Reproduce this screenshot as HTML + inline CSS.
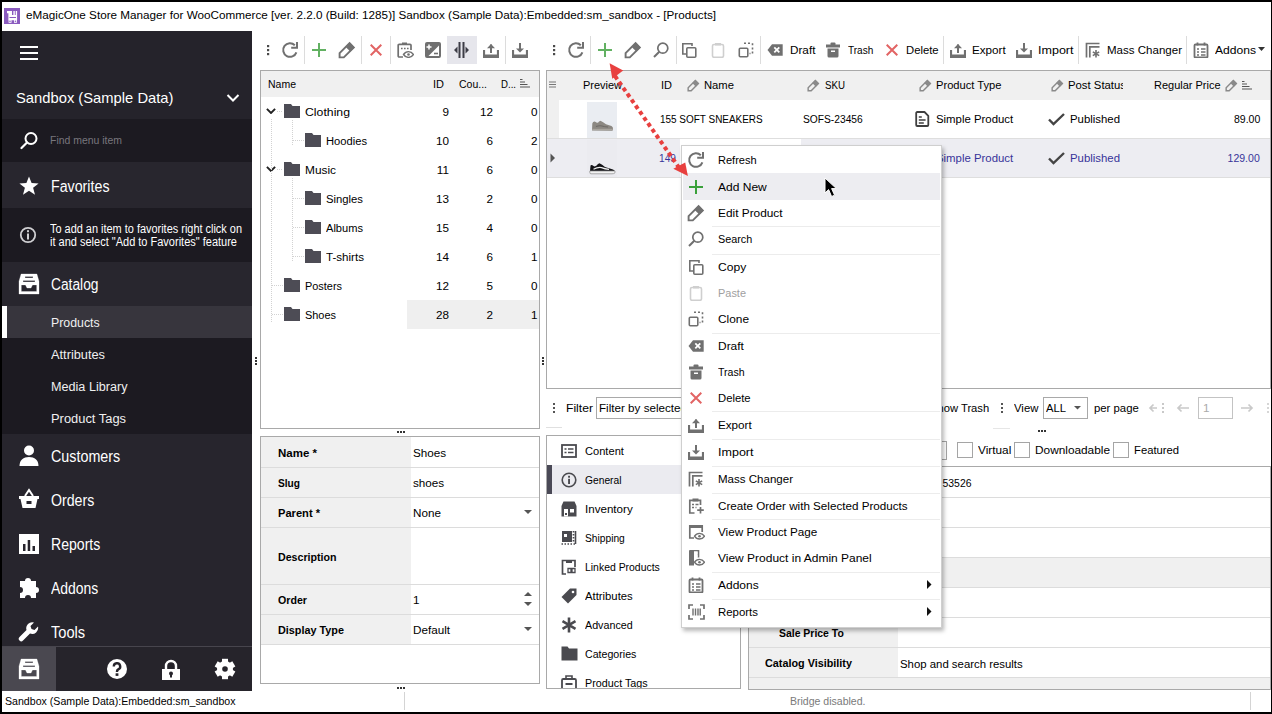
<!DOCTYPE html>
<html><head><meta charset="utf-8"><style>
html,body{margin:0;padding:0;}
body{width:1272px;height:714px;position:relative;overflow:hidden;background:#000;font-family:"Liberation Sans", sans-serif;}
div,svg{font-family:"Liberation Sans", sans-serif;}
</style></head><body>
<div style="position:absolute;left:2px;top:2px;width:1269px;height:710px;background:#ffffff;"></div>
<svg style="position:absolute;left:4px;top:8px;" width="16" height="16" viewBox="0 0 16 16"><rect width="16" height="16" fill="#8a5bbf"/><path d="M3 3H8V7.1H9.4V3H10.8V7.1H11.7V3H13.1V12.3H4.4V5.2H3Z" fill="#fff"/><rect x="4.6" y="11.8" width="2.9" height="3" fill="#fff"/><rect x="10" y="11.8" width="2.9" height="3" fill="#fff"/><circle cx="6" cy="13.3" r="0.8" fill="#8a5bbf"/><circle cx="11.4" cy="13.3" r="0.8" fill="#8a5bbf"/><rect x="5.5" y="9" width="6.5" height="1" fill="#8a5bbf"/></svg>
<div id="t0" style="transform:scaleX(1.0014);position:absolute;left:26px;transform-origin:left top;top:9.10px;font-size:11.7px;line-height:11.7px;font-weight:normal;color:#000;white-space:pre;">eMagicOne Store Manager for WooCommerce [ver. 2.2.0 (Build: 1285)] Sandbox (Sample Data):Embedded:sm_sandbox - [Products]</div>
<div style="position:absolute;left:2px;top:31px;width:250px;height:660px;background:#25232b;"></div>
<div style="position:absolute;left:2px;top:119px;width:250px;height:43px;background:#1c1a21;"></div>
<div style="position:absolute;left:2px;top:162px;width:250px;height:46px;background:#28262e;"></div>
<div style="position:absolute;left:2px;top:208px;width:250px;height:54px;background:#1c1a21;"></div>
<div style="position:absolute;left:2px;top:262px;width:250px;height:44px;background:#28262e;"></div>
<div style="position:absolute;left:2px;top:306px;width:250px;height:32px;background:#37353d;"></div>
<div style="position:absolute;left:2px;top:306px;width:5px;height:32px;background:#ffffff;"></div>
<div style="position:absolute;left:2px;top:338px;width:250px;height:96px;background:#1c1a21;"></div>
<div style="position:absolute;left:2px;top:434px;width:250px;height:212px;background:#27252d;"></div>
<div style="position:absolute;left:2px;top:646px;width:250px;height:1px;background:#47454d;"></div>
<div style="position:absolute;left:2px;top:647px;width:250px;height:44px;background:#26242b;"></div>
<div style="position:absolute;left:2px;top:647px;width:54px;height:44px;background:#4a4850;"></div>
<div style="position:absolute;left:20px;top:46px;width:18px;height:2px;background:#ffffff;"></div>
<div style="position:absolute;left:20px;top:52px;width:18px;height:2px;background:#ffffff;"></div>
<div style="position:absolute;left:20px;top:58px;width:18px;height:2px;background:#ffffff;"></div>
<div id="t1" style="transform:scaleX(0.9838);position:absolute;left:15.6px;transform-origin:left top;top:90.30px;font-size:15px;line-height:15px;font-weight:normal;color:#ffffff;white-space:pre;">Sandbox (Sample Data)</div>
<svg style="position:absolute;left:226px;top:93px;" width="14" height="10" viewBox="0 0 14 10"><path d="M1.5 2l5.5 5.5 5.5-5.5" stroke="#fff" stroke-width="2" fill="none"/></svg>
<svg style="position:absolute;left:20px;top:131px;" width="19" height="19" viewBox="0 0 19 19"><circle cx="11" cy="7.5" r="5.5" stroke="#fff" stroke-width="2" fill="none"/><path d="M7 11.5l-5.5 5.5" stroke="#fff" stroke-width="2.2" stroke-linecap="round"/></svg>
<div id="t2" style="transform:scaleX(0.9497);position:absolute;left:49.5px;transform-origin:left top;top:134.69px;font-size:11px;line-height:11px;font-weight:normal;color:#78767d;white-space:pre;">Find menu item</div>
<svg style="position:absolute;left:19px;top:176px;" width="20" height="20" viewBox="0 0 20 20"><path d="M10 0.5l2.6 6.6 7 .3-5.5 4.4 1.9 6.9L10 14.8l-6 3.9 1.9-6.9L.4 7.4l7-.3z" fill="#fff"/></svg>
<div id="t3" style="transform:scaleX(0.9121);position:absolute;left:51.2px;transform-origin:left top;top:178.99px;font-size:15.6px;line-height:15.6px;font-weight:normal;color:#ffffff;white-space:pre;">Favorites</div>
<svg style="position:absolute;left:19px;top:226px;" width="18" height="18" viewBox="0 0 18 18"><circle cx="9" cy="9" r="7.2" stroke="#cfcfd2" stroke-width="1.8" fill="none"/><rect x="8" y="7.5" width="2" height="6" fill="#cfcfd2"/><rect x="8" y="4.2" width="2" height="2" fill="#cfcfd2"/></svg>
<div id="t4" style="transform:scaleX(0.9109);position:absolute;left:49.6px;transform-origin:left top;top:222.84px;font-size:12px;line-height:12px;font-weight:normal;color:#ffffff;white-space:pre;">To add an item to favorites right click on</div>
<div id="t5" style="transform:scaleX(0.9168);position:absolute;left:49.6px;transform-origin:left top;top:235.84px;font-size:12px;line-height:12px;font-weight:normal;color:#ffffff;white-space:pre;">it and select "Add to Favorites" feature</div>
<svg style="position:absolute;left:18px;top:273px;" width="22" height="22" viewBox="0 0 22 22"><path d="M3.1 1H18.9L21 8.3V21H1V8.3Z M7 3.5H15V5H7Z M5 7.5H17V9H5Z M3.3 11.9H7.5L9 15H13L14.5 11.9H18.7V18.5H3.3Z" fill="#fff" fill-rule="evenodd" stroke="#fff" stroke-width="0.3" stroke-linejoin="round"/></svg>
<div id="t6" style="transform:scaleX(0.8837);position:absolute;left:51.2px;transform-origin:left top;top:277.19px;font-size:15.6px;line-height:15.6px;font-weight:normal;color:#ffffff;white-space:pre;">Catalog</div>
<div id="t7" style="transform:scaleX(0.9870);position:absolute;left:51.2px;transform-origin:left top;top:316.72px;font-size:12.5px;line-height:12.5px;font-weight:normal;color:#f0f0f0;white-space:pre;">Products</div>
<div id="t8" style="transform:scaleX(1.0225);position:absolute;left:51.2px;transform-origin:left top;top:349.22px;font-size:12.5px;line-height:12.5px;font-weight:normal;color:#f0f0f0;white-space:pre;">Attributes</div>
<div id="t9" style="transform:scaleX(1.0101);position:absolute;left:51.2px;transform-origin:left top;top:381.22px;font-size:12.5px;line-height:12.5px;font-weight:normal;color:#f0f0f0;white-space:pre;">Media Library</div>
<div id="t10" style="transform:scaleX(1.0311);position:absolute;left:51.2px;transform-origin:left top;top:412.72px;font-size:12.5px;line-height:12.5px;font-weight:normal;color:#f0f0f0;white-space:pre;">Product Tags</div>
<svg style="position:absolute;left:18px;top:445px;" width="22" height="22" viewBox="0 0 22 22"><circle cx="11" cy="5.5" r="5" fill="#fff"/><path d="M1.5 21c0-6 4-9 9.5-9s9.5 3 9.5 9z" fill="#fff"/></svg>
<div id="t11" style="transform:scaleX(0.9179);position:absolute;left:51.2px;transform-origin:left top;top:449.19px;font-size:15.6px;line-height:15.6px;font-weight:normal;color:#ffffff;white-space:pre;">Customers</div>
<svg style="position:absolute;left:18px;top:488px;" width="22" height="22" viewBox="0 0 22 22"><path d="M7 8l4-6 4 6" stroke="#fff" stroke-width="2" fill="none"/><path d="M1 8h20v3h-1.5l-2 9h-13l-2-9H1z" fill="#fff"/><rect x="8.5" y="13" width="5" height="3" fill="#27252d"/></svg>
<div id="t12" style="transform:scaleX(0.9083);position:absolute;left:51.2px;transform-origin:left top;top:492.89px;font-size:15.6px;line-height:15.6px;font-weight:normal;color:#ffffff;white-space:pre;">Orders</div>
<svg style="position:absolute;left:18px;top:533px;" width="22" height="22" viewBox="0 0 22 22"><path d="M1 1h20v20H1z M5 11v7h2.5v-7z M9.7 7v11h2.5V7z M14.5 13v5H17v-5z" fill="#fff" fill-rule="evenodd"/></svg>
<div id="t13" style="transform:scaleX(0.9028);position:absolute;left:51.2px;transform-origin:left top;top:536.59px;font-size:15.6px;line-height:15.6px;font-weight:normal;color:#ffffff;white-space:pre;">Reports</div>
<svg style="position:absolute;left:18px;top:577px;" width="22" height="22" viewBox="0 0 22 22"><path d="M2 4h5a3 3 0 1 1 6 0h5v6a3 3 0 1 1 0 6v5h-5a3 3 0 1 0-6 0H2v-5a3 3 0 1 0 0-6z" fill="#fff"/></svg>
<div id="t14" style="transform:scaleX(0.8943);position:absolute;left:51.2px;transform-origin:left top;top:580.99px;font-size:15.6px;line-height:15.6px;font-weight:normal;color:#ffffff;white-space:pre;">Addons</div>
<svg style="position:absolute;left:18px;top:621px;" width="22" height="22" viewBox="0 0 22 22"><path d="M20 5.5l-3.5 3.5-3-1-1-3L16 1.5A6 6 0 0 0 8.5 9L1.5 16a2.2 2.2 0 0 0 3.5 3.5L12 12.5A6 6 0 0 0 20 5.5z" fill="#fff"/></svg>
<div id="t15" style="transform:scaleX(0.9394);position:absolute;left:51.2px;transform-origin:left top;top:624.69px;font-size:15.6px;line-height:15.6px;font-weight:normal;color:#ffffff;white-space:pre;">Tools</div>
<svg style="position:absolute;left:18px;top:658px;" width="22" height="22" viewBox="0 0 22 22"><path d="M3.1 1H18.9L21 8.3V21H1V8.3Z M7 3.5H15V5H7Z M5 7.5H17V9H5Z M3.3 11.9H7.5L9 15H13L14.5 11.9H18.7V18.5H3.3Z" fill="#fff" fill-rule="evenodd" stroke="#fff" stroke-width="0.3" stroke-linejoin="round"/></svg>
<svg style="position:absolute;left:106px;top:658px;" width="22" height="22" viewBox="0 0 22 22"><circle cx="11" cy="11" r="10" fill="#fff"/><path d="M7.8 8.5a3.2 3.2 0 1 1 4.5 2.9c-.9.5-1.3 1-1.3 2v.6" stroke="#26242b" stroke-width="2.4" fill="none"/><rect x="9.6" y="15.3" width="2.8" height="2.6" fill="#26242b"/></svg>
<svg style="position:absolute;left:160px;top:659px;" width="22" height="22" viewBox="0 0 22 22"><path d="M6 10V7a5 5 0 0 1 10 0v3" stroke="#fff" stroke-width="2.4" fill="none"/><rect x="2" y="10" width="18" height="11" fill="#fff"/><circle cx="11" cy="14.5" r="2" fill="#26242b"/><rect x="10" y="15" width="2" height="3.5" fill="#26242b"/></svg>
<svg style="position:absolute;left:214px;top:658px;" width="22" height="22" viewBox="0 0 22 22"><circle cx="11" cy="11" r="8" fill="#fff"/><rect x="8" y="0.8" width="6" height="5" transform="rotate(0 11 11)" fill="#fff"/><rect x="8" y="0.8" width="6" height="5" transform="rotate(60 11 11)" fill="#fff"/><rect x="8" y="0.8" width="6" height="5" transform="rotate(120 11 11)" fill="#fff"/><rect x="8" y="0.8" width="6" height="5" transform="rotate(180 11 11)" fill="#fff"/><rect x="8" y="0.8" width="6" height="5" transform="rotate(240 11 11)" fill="#fff"/><rect x="8" y="0.8" width="6" height="5" transform="rotate(300 11 11)" fill="#fff"/><circle cx="11" cy="11" r="2.8" fill="#26242b"/></svg>
<div id="t16" style="transform:scaleX(0.9641);position:absolute;left:4.5px;transform-origin:left top;top:695.99px;font-size:11px;line-height:11px;font-weight:normal;color:#000;white-space:pre;">Sandbox (Sample Data):Embedded:sm_sandbox</div>
<div style="position:absolute;left:404px;top:692px;width:1px;height:18px;background:#d4d4d4;"></div>
<div id="t17" style="transform:scaleX(0.9570);position:absolute;left:790px;transform-origin:left top;top:696.19px;font-size:11px;line-height:11px;font-weight:normal;color:#7a7a7a;white-space:pre;">Bridge disabled.</div>
<div style="position:absolute;left:1250px;top:692px;width:1px;height:18px;background:#d4d4d4;"></div>
<svg style="position:absolute;left:267px;top:45px;" width="3" height="11" viewBox="0 0 3 11"><rect x="0" y="0" width="2.2" height="2.2" fill="#4a4a4a"/><rect x="0" y="4" width="2.2" height="2.2" fill="#4a4a4a"/><rect x="0" y="8" width="2.2" height="2.2" fill="#4a4a4a"/></svg>
<svg style="position:absolute;left:281px;top:41px;" width="18" height="18" viewBox="0 0 18 18"><path d="M15.4 11.3A6.8 6.8 0 1 1 13.8 4.2" stroke="#707070" stroke-width="2" fill="none"/><path d="M16 1V6.8H10.2" stroke="#707070" stroke-width="2" fill="none"/></svg>
<div style="position:absolute;left:304px;top:36px;width:1px;height:28px;background:#dcdcdc;"></div>
<svg style="position:absolute;left:312.0px;top:43.0px;" width="14" height="14" viewBox="0 0 14 14"><path d="M7.0 0V14 M0 7.0H14" stroke="#62b162" stroke-width="2"/></svg>
<svg style="position:absolute;left:338px;top:41px;" width="18" height="18" viewBox="0 0 18 18"><path d="M1.6 16.4V12.2L11.6 2.2L15.8 6.4L5.8 16.4Z" stroke="#707070" stroke-width="1.9" fill="none" stroke-linejoin="miter"/><path d="M11.6 1.5L16.5 6.4L12.3 10.6L7.4 5.7Z" fill="#707070"/></svg>
<div style="position:absolute;left:361px;top:36px;width:1px;height:28px;background:#dcdcdc;"></div>
<svg style="position:absolute;left:370.0px;top:44.0px;" width="12" height="12" viewBox="0 0 12 12"><path d="M0.7 0.7L11.3 11.3M11.3 0.7L0.7 11.3" stroke="#e26464" stroke-width="2"/></svg>
<div style="position:absolute;left:390px;top:36px;width:1px;height:28px;background:#dcdcdc;"></div>
<svg style="position:absolute;left:397px;top:42px;" width="17" height="16" viewBox="0 0 17 16"><path d="M6 15H2.2a1 1 0 0 1-1-1V3.3a1 1 0 0 1 1-1H13a1 1 0 0 1 1 1V8" stroke="#707070" stroke-width="1.7" fill="none"/><rect x="5" y="0.5" width="5" height="2.5" fill="#707070"/><path d="M4 6.5h1.6M7 6.5h1.6M10 6.5h1.6" stroke="#707070" stroke-width="1.6"/><path d="M6.5 12.5c2.5-3.8 7.5-3.8 10 0c-2.5 3.8-7.5 3.8-10 0z" stroke="#707070" stroke-width="1.4" fill="#fff"/><circle cx="11.5" cy="12.5" r="1.3" fill="#707070"/></svg>
<svg style="position:absolute;left:425px;top:42px;" width="16" height="16" viewBox="0 0 16 16"><rect x="0" y="0" width="16" height="16" rx="2" fill="#707070"/><path d="M14 3.5L3.5 14H14z" fill="#fff"/><path d="M4 2.5v5M1.5 5h5" stroke="#fff" stroke-width="1.5"/><path d="M9 11.5h4" stroke="#707070" stroke-width="1.6"/></svg>
<div style="position:absolute;left:447px;top:36px;width:30px;height:28px;background:#e6e6ec;"></div>
<svg style="position:absolute;left:454px;top:42px;" width="16" height="16" viewBox="0 0 16 16"><rect x="4.5" y="0" width="2" height="16" fill="#3c3c46"/><rect x="8.5" y="0" width="2" height="16" fill="#3c3c46"/><path d="M3.5 4.5L0 8l3.5 3.5z M11.5 4.5L15 8l-3.5 3.5z" fill="#3c3c46"/></svg>
<svg style="position:absolute;left:483px;top:42px;" width="16" height="16" viewBox="0 0 16 16"><path d="M1 8v7h14V8" stroke="#707070" stroke-width="2.2" fill="none"/><rect x="1" y="12.5" width="14" height="3" fill="#707070" rx="1"/><path d="M8 11V2.5" stroke="#707070" stroke-width="2"/><path d="M4 6.2L8 2l4 4.2z" fill="#707070"/></svg>
<div style="position:absolute;left:505px;top:36px;width:1px;height:28px;background:#dcdcdc;"></div>
<svg style="position:absolute;left:512px;top:42px;" width="16" height="16" viewBox="0 0 16 16"><path d="M1 8v7h14V8" stroke="#707070" stroke-width="2.2" fill="none"/><rect x="1" y="12.5" width="14" height="3" fill="#707070" rx="1"/><path d="M8 1V9" stroke="#707070" stroke-width="2"/><path d="M4 6.5L8 10.5l4-4z" fill="#707070"/></svg>
<svg style="position:absolute;left:553px;top:45px;" width="3" height="11" viewBox="0 0 3 11"><rect x="0" y="0" width="2.2" height="2.2" fill="#4a4a4a"/><rect x="0" y="4" width="2.2" height="2.2" fill="#4a4a4a"/><rect x="0" y="8" width="2.2" height="2.2" fill="#4a4a4a"/></svg>
<svg style="position:absolute;left:567px;top:41px;" width="18" height="18" viewBox="0 0 18 18"><path d="M15.4 11.3A6.8 6.8 0 1 1 13.8 4.2" stroke="#707070" stroke-width="2" fill="none"/><path d="M16 1V6.8H10.2" stroke="#707070" stroke-width="2" fill="none"/></svg>
<div style="position:absolute;left:590px;top:36px;width:1px;height:28px;background:#dcdcdc;"></div>
<svg style="position:absolute;left:598.0px;top:43.0px;" width="14" height="14" viewBox="0 0 14 14"><path d="M7.0 0V14 M0 7.0H14" stroke="#62b162" stroke-width="2"/></svg>
<svg style="position:absolute;left:624px;top:41px;" width="18" height="18" viewBox="0 0 18 18"><path d="M1.6 16.4V12.2L11.6 2.2L15.8 6.4L5.8 16.4Z" stroke="#707070" stroke-width="1.9" fill="none" stroke-linejoin="miter"/><path d="M11.6 1.5L16.5 6.4L12.3 10.6L7.4 5.7Z" fill="#707070"/></svg>
<svg style="position:absolute;left:653px;top:42px;" width="16" height="16" viewBox="0 0 16 16"><circle cx="9.8" cy="6.2" r="5" stroke="#707070" stroke-width="1.7" fill="none"/><path d="M6.3 9.7L1 15" stroke="#707070" stroke-width="2"/></svg>
<div style="position:absolute;left:676px;top:36px;width:1px;height:28px;background:#dcdcdc;"></div>
<svg style="position:absolute;left:681px;top:42px;" width="16" height="16" viewBox="0 0 16 16"><path d="M5 12H1.8V1.8H11V4" stroke="#707070" stroke-width="1.6" fill="none"/><rect x="5.8" y="5.8" width="9" height="9.4" rx="1" stroke="#707070" stroke-width="1.6" fill="none"/></svg>
<svg style="position:absolute;left:710px;top:42px;" width="16" height="16" viewBox="0 0 16 16"><rect x="2.5" y="2.5" width="11" height="12.8" rx="1.5" stroke="#cfcfcf" stroke-width="1.6" fill="none"/><rect x="5" y="1" width="6" height="2.5" fill="#cfcfcf"/></svg>
<svg style="position:absolute;left:738px;top:42px;" width="16" height="16" viewBox="0 0 16 16"><rect x="1.3" y="6.3" width="8.5" height="8.5" rx="1" stroke="#707070" stroke-width="1.6" fill="none"/><path d="M6 1.3h2M10 1.3h2M14.5 1.3v2M14.5 5.5v2M14.5 9.5v2M12.5 11.5h-1" stroke="#707070" stroke-width="1.6"/></svg>
<div style="position:absolute;left:760px;top:36px;width:1px;height:28px;background:#dcdcdc;"></div>
<svg style="position:absolute;left:767px;top:44px;" width="16" height="12" viewBox="0 0 16 12"><path d="M0.5 6L5 0.3h10.7v11.4H5z" fill="#707070"/><path d="M7.3 3.3l5 5M12.3 3.3l-5 5" stroke="#fff" stroke-width="1.8"/></svg>
<div id="t18" style="transform:scaleX(1.0028);position:absolute;left:789.6px;transform-origin:left top;top:44.10px;font-size:11.7px;line-height:11.7px;font-weight:normal;color:#000;white-space:pre;">Draft</div>
<svg style="position:absolute;left:826px;top:42px;" width="14" height="16" viewBox="0 0 14 16"><rect x="0" y="2.5" width="14" height="3" fill="#707070"/><rect x="4.5" y="0.5" width="5" height="3" rx="1" fill="#707070"/><path d="M1.5 6.5h11v7.5a1.5 1.5 0 0 1-1.5 1.5H3A1.5 1.5 0 0 1 1.5 14z" fill="#707070"/><rect x="5" y="8.5" width="4" height="1.5" fill="#fff"/></svg>
<div id="t19" style="transform:scaleX(0.8590);position:absolute;left:847.7px;transform-origin:left top;top:44.10px;font-size:11.7px;line-height:11.7px;font-weight:normal;color:#000;white-space:pre;">Trash</div>
<svg style="position:absolute;left:886.0px;top:44.0px;" width="12" height="12" viewBox="0 0 12 12"><path d="M0.7 0.7L11.3 11.3M11.3 0.7L0.7 11.3" stroke="#e26464" stroke-width="2"/></svg>
<div id="t20" style="transform:scaleX(0.9646);position:absolute;left:906px;transform-origin:left top;top:44.10px;font-size:11.7px;line-height:11.7px;font-weight:normal;color:#000;white-space:pre;">Delete</div>
<div style="position:absolute;left:943px;top:36px;width:1px;height:28px;background:#dcdcdc;"></div>
<svg style="position:absolute;left:950px;top:42px;" width="16" height="16" viewBox="0 0 16 16"><path d="M1 8v7h14V8" stroke="#707070" stroke-width="2.2" fill="none"/><rect x="1" y="12.5" width="14" height="3" fill="#707070" rx="1"/><path d="M8 11V2.5" stroke="#707070" stroke-width="2"/><path d="M4 6.2L8 2l4 4.2z" fill="#707070"/></svg>
<div id="t21" style="transform:scaleX(0.9976);position:absolute;left:972px;transform-origin:left top;top:44.10px;font-size:11.7px;line-height:11.7px;font-weight:normal;color:#000;white-space:pre;">Export</div>
<svg style="position:absolute;left:1016px;top:42px;" width="16" height="16" viewBox="0 0 16 16"><path d="M1 8v7h14V8" stroke="#707070" stroke-width="2.2" fill="none"/><rect x="1" y="12.5" width="14" height="3" fill="#707070" rx="1"/><path d="M8 1V9" stroke="#707070" stroke-width="2"/><path d="M4 6.5L8 10.5l4-4z" fill="#707070"/></svg>
<div id="t22" style="transform:scaleX(1.0717);position:absolute;left:1038px;transform-origin:left top;top:44.10px;font-size:11.7px;line-height:11.7px;font-weight:normal;color:#000;white-space:pre;">Import</div>
<div style="position:absolute;left:1078px;top:36px;width:1px;height:28px;background:#dcdcdc;"></div>
<svg style="position:absolute;left:1085px;top:42px;" width="16" height="16" viewBox="0 0 16 16"><path d="M1.5 15.5V1.5H14.5M4.8 15.5V4.8H14.5" stroke="#707070" stroke-width="1.7" fill="none"/><path d="M11 8v7.5M7.8 9.9l6.4 3.7M7.8 13.6l6.4-3.7" stroke="#707070" stroke-width="1.6"/></svg>
<div id="t23" style="transform:scaleX(0.9866);position:absolute;left:1107px;transform-origin:left top;top:44.10px;font-size:11.7px;line-height:11.7px;font-weight:normal;color:#000;white-space:pre;">Mass Changer</div>
<div style="position:absolute;left:1186px;top:36px;width:1px;height:28px;background:#dcdcdc;"></div>
<svg style="position:absolute;left:1192.5px;top:42px;" width="16" height="16" viewBox="0 0 16 16"><rect x="1.5" y="2.5" width="13" height="13" rx="1" stroke="#707070" stroke-width="1.8" fill="none"/><path d="M4.5 0.5v3M11.5 0.5v3" stroke="#707070" stroke-width="1.8"/><path d="M4 7h2M8 7h4.5M4 10h2M8 10h4.5M4 13h2M8 13h4.5" stroke="#707070" stroke-width="1.6"/></svg>
<div id="t24" style="transform:scaleX(1.0343);position:absolute;left:1215px;transform-origin:left top;top:44.10px;font-size:11.7px;line-height:11.7px;font-weight:normal;color:#000;white-space:pre;">Addons</div>
<svg style="position:absolute;left:1258px;top:47px;" width="7" height="5" viewBox="0 0 7 5"><path d="M0 0h7L3.5 4z" fill="#333"/></svg>
<div style="position:absolute;left:260px;top:70px;width:280px;height:359px;border:1px solid #a9a9a9;background:#fff;box-sizing:border-box;"></div>
<div style="position:absolute;left:261px;top:71px;width:278px;height:26px;background:#f0f0f0;"></div>
<div id="t25" style="transform:scaleX(0.8978);position:absolute;left:268.4px;transform-origin:left top;top:78.10px;font-size:11.7px;line-height:11.7px;font-weight:normal;color:#000;white-space:pre;">Name</div>
<div id="t26" style="transform:scaleX(0.9412);position:absolute;left:433px;transform-origin:left top;top:78.10px;font-size:11.7px;line-height:11.7px;font-weight:normal;color:#000;white-space:pre;">ID</div>
<div id="t27" style="transform:scaleX(0.8978);position:absolute;left:458.5px;transform-origin:left top;top:78.10px;font-size:11.7px;line-height:11.7px;font-weight:normal;color:#000;white-space:pre;">Cou...</div>
<div id="t28" style="transform:scaleX(0.8247);position:absolute;left:501px;transform-origin:left top;top:78.10px;font-size:11.7px;line-height:11.7px;font-weight:normal;color:#000;white-space:pre;">D...</div>
<svg style="position:absolute;left:520px;top:79px;" width="10" height="9" viewBox="0 0 10 9"><path d="M0 0.5h2.5M0 3h5M0 5.5h7.5M0 8h10" stroke="#555" stroke-width="1"/></svg>
<div style="position:absolute;left:261px;top:97px;width:278px;height:0px;background:#fff;"></div>
<div style="position:absolute;left:407px;top:300px;width:132px;height:29px;background:#efefef;"></div>
<svg style="position:absolute;left:284px;top:104px;" width="16" height="14" viewBox="0 0 16 14"><path d="M0 0h7l1.5 2H16v12H0z" fill="#4d4c55"/></svg>
<div id="t29" style="transform:scaleX(1.0492);position:absolute;left:304.8px;transform-origin:left top;top:106.10px;font-size:11.7px;line-height:11.7px;font-weight:normal;color:#000;white-space:pre;">Clothing</div>
<div id="t30" style="position:absolute;right:823px;transform-origin:right top;top:106.10px;font-size:11.7px;line-height:11.7px;font-weight:normal;color:#000;white-space:pre;">9</div>
<div id="t31" style="position:absolute;right:779px;transform-origin:right top;top:106.10px;font-size:11.7px;line-height:11.7px;font-weight:normal;color:#000;white-space:pre;">12</div>
<div id="t32" style="position:absolute;left:531px;transform-origin:left top;top:106.10px;font-size:11.7px;line-height:11.7px;font-weight:normal;color:#000;white-space:pre;">0</div>
<svg style="position:absolute;left:265.8px;top:108px;" width="10" height="6" viewBox="0 0 10 6"><path d="M0.9 0.9L5 5l4.1-4.1" stroke="#222" stroke-width="1.9" fill="none"/></svg>
<svg style="position:absolute;left:305px;top:133px;" width="16" height="14" viewBox="0 0 16 14"><path d="M0 0h7l1.5 2H16v12H0z" fill="#4d4c55"/></svg>
<div id="t33" style="transform:scaleX(0.9559);position:absolute;left:325.8px;transform-origin:left top;top:135.10px;font-size:11.7px;line-height:11.7px;font-weight:normal;color:#000;white-space:pre;">Hoodies</div>
<div id="t34" style="position:absolute;right:823px;transform-origin:right top;top:135.10px;font-size:11.7px;line-height:11.7px;font-weight:normal;color:#000;white-space:pre;">10</div>
<div id="t35" style="position:absolute;right:779px;transform-origin:right top;top:135.10px;font-size:11.7px;line-height:11.7px;font-weight:normal;color:#000;white-space:pre;">6</div>
<div id="t36" style="position:absolute;left:531px;transform-origin:left top;top:135.10px;font-size:11.7px;line-height:11.7px;font-weight:normal;color:#000;white-space:pre;">2</div>
<svg style="position:absolute;left:284px;top:162px;" width="16" height="14" viewBox="0 0 16 14"><path d="M0 0h7l1.5 2H16v12H0z" fill="#4d4c55"/></svg>
<div id="t37" style="transform:scaleX(1.0154);position:absolute;left:304.8px;transform-origin:left top;top:164.10px;font-size:11.7px;line-height:11.7px;font-weight:normal;color:#000;white-space:pre;">Music</div>
<div id="t38" style="position:absolute;right:823px;transform-origin:right top;top:164.10px;font-size:11.7px;line-height:11.7px;font-weight:normal;color:#000;white-space:pre;">11</div>
<div id="t39" style="position:absolute;right:779px;transform-origin:right top;top:164.10px;font-size:11.7px;line-height:11.7px;font-weight:normal;color:#000;white-space:pre;">6</div>
<div id="t40" style="position:absolute;left:531px;transform-origin:left top;top:164.10px;font-size:11.7px;line-height:11.7px;font-weight:normal;color:#000;white-space:pre;">0</div>
<svg style="position:absolute;left:265.8px;top:166px;" width="10" height="6" viewBox="0 0 10 6"><path d="M0.9 0.9L5 5l4.1-4.1" stroke="#222" stroke-width="1.9" fill="none"/></svg>
<svg style="position:absolute;left:305px;top:191px;" width="16" height="14" viewBox="0 0 16 14"><path d="M0 0h7l1.5 2H16v12H0z" fill="#4d4c55"/></svg>
<div id="t41" style="transform:scaleX(0.9650);position:absolute;left:325.8px;transform-origin:left top;top:193.10px;font-size:11.7px;line-height:11.7px;font-weight:normal;color:#000;white-space:pre;">Singles</div>
<div id="t42" style="position:absolute;right:823px;transform-origin:right top;top:193.10px;font-size:11.7px;line-height:11.7px;font-weight:normal;color:#000;white-space:pre;">13</div>
<div id="t43" style="position:absolute;right:779px;transform-origin:right top;top:193.10px;font-size:11.7px;line-height:11.7px;font-weight:normal;color:#000;white-space:pre;">2</div>
<div id="t44" style="position:absolute;left:531px;transform-origin:left top;top:193.10px;font-size:11.7px;line-height:11.7px;font-weight:normal;color:#000;white-space:pre;">0</div>
<svg style="position:absolute;left:305px;top:220px;" width="16" height="14" viewBox="0 0 16 14"><path d="M0 0h7l1.5 2H16v12H0z" fill="#4d4c55"/></svg>
<div id="t45" style="transform:scaleX(0.9491);position:absolute;left:325.8px;transform-origin:left top;top:222.10px;font-size:11.7px;line-height:11.7px;font-weight:normal;color:#000;white-space:pre;">Albums</div>
<div id="t46" style="position:absolute;right:823px;transform-origin:right top;top:222.10px;font-size:11.7px;line-height:11.7px;font-weight:normal;color:#000;white-space:pre;">15</div>
<div id="t47" style="position:absolute;right:779px;transform-origin:right top;top:222.10px;font-size:11.7px;line-height:11.7px;font-weight:normal;color:#000;white-space:pre;">4</div>
<div id="t48" style="position:absolute;left:531px;transform-origin:left top;top:222.10px;font-size:11.7px;line-height:11.7px;font-weight:normal;color:#000;white-space:pre;">0</div>
<svg style="position:absolute;left:305px;top:249px;" width="16" height="14" viewBox="0 0 16 14"><path d="M0 0h7l1.5 2H16v12H0z" fill="#4d4c55"/></svg>
<div id="t49" style="transform:scaleX(0.9918);position:absolute;left:325.8px;transform-origin:left top;top:251.10px;font-size:11.7px;line-height:11.7px;font-weight:normal;color:#000;white-space:pre;">T-shirts</div>
<div id="t50" style="position:absolute;right:823px;transform-origin:right top;top:251.10px;font-size:11.7px;line-height:11.7px;font-weight:normal;color:#000;white-space:pre;">14</div>
<div id="t51" style="position:absolute;right:779px;transform-origin:right top;top:251.10px;font-size:11.7px;line-height:11.7px;font-weight:normal;color:#000;white-space:pre;">6</div>
<div id="t52" style="position:absolute;left:531px;transform-origin:left top;top:251.10px;font-size:11.7px;line-height:11.7px;font-weight:normal;color:#000;white-space:pre;">1</div>
<svg style="position:absolute;left:284px;top:278px;" width="16" height="14" viewBox="0 0 16 14"><path d="M0 0h7l1.5 2H16v12H0z" fill="#4d4c55"/></svg>
<div id="t53" style="transform:scaleX(0.9338);position:absolute;left:304.8px;transform-origin:left top;top:280.10px;font-size:11.7px;line-height:11.7px;font-weight:normal;color:#000;white-space:pre;">Posters</div>
<div id="t54" style="position:absolute;right:823px;transform-origin:right top;top:280.10px;font-size:11.7px;line-height:11.7px;font-weight:normal;color:#000;white-space:pre;">12</div>
<div id="t55" style="position:absolute;right:779px;transform-origin:right top;top:280.10px;font-size:11.7px;line-height:11.7px;font-weight:normal;color:#000;white-space:pre;">5</div>
<div id="t56" style="position:absolute;left:531px;transform-origin:left top;top:280.10px;font-size:11.7px;line-height:11.7px;font-weight:normal;color:#000;white-space:pre;">0</div>
<svg style="position:absolute;left:284px;top:307px;" width="16" height="14" viewBox="0 0 16 14"><path d="M0 0h7l1.5 2H16v12H0z" fill="#4d4c55"/></svg>
<div id="t57" style="transform:scaleX(0.9354);position:absolute;left:304.8px;transform-origin:left top;top:309.10px;font-size:11.7px;line-height:11.7px;font-weight:normal;color:#000;white-space:pre;">Shoes</div>
<div id="t58" style="position:absolute;right:823px;transform-origin:right top;top:309.10px;font-size:11.7px;line-height:11.7px;font-weight:normal;color:#000;white-space:pre;">28</div>
<div id="t59" style="position:absolute;right:779px;transform-origin:right top;top:309.10px;font-size:11.7px;line-height:11.7px;font-weight:normal;color:#000;white-space:pre;">2</div>
<div id="t60" style="position:absolute;left:531px;transform-origin:left top;top:309.10px;font-size:11.7px;line-height:11.7px;font-weight:normal;color:#000;white-space:pre;">1</div>
<div style="position:absolute;left:271px;top:119px;width:1px;height:203px;background:repeating-linear-gradient(to bottom,#d2d2d2 0 1px,transparent 1px 2px)"></div>
<div style="position:absolute;left:277px;top:111px;width:6px;height:1px;background:repeating-linear-gradient(to right,#d2d2d2 0 1px,transparent 1px 2px)"></div>
<div style="position:absolute;left:277px;top:169px;width:6px;height:1px;background:repeating-linear-gradient(to right,#d2d2d2 0 1px,transparent 1px 2px)"></div>
<div style="position:absolute;left:272px;top:285px;width:11px;height:1px;background:repeating-linear-gradient(to right,#d2d2d2 0 1px,transparent 1px 2px)"></div>
<div style="position:absolute;left:272px;top:314px;width:11px;height:1px;background:repeating-linear-gradient(to right,#d2d2d2 0 1px,transparent 1px 2px)"></div>
<div style="position:absolute;left:292px;top:120px;width:1px;height:26px;background:repeating-linear-gradient(to bottom,#d2d2d2 0 1px,transparent 1px 2px)"></div>
<div style="position:absolute;left:293px;top:140px;width:11px;height:1px;background:repeating-linear-gradient(to right,#d2d2d2 0 1px,transparent 1px 2px)"></div>
<div style="position:absolute;left:292px;top:178px;width:1px;height:84px;background:repeating-linear-gradient(to bottom,#d2d2d2 0 1px,transparent 1px 2px)"></div>
<div style="position:absolute;left:293px;top:198px;width:11px;height:1px;background:repeating-linear-gradient(to right,#d2d2d2 0 1px,transparent 1px 2px)"></div>
<div style="position:absolute;left:293px;top:227px;width:11px;height:1px;background:repeating-linear-gradient(to right,#d2d2d2 0 1px,transparent 1px 2px)"></div>
<div style="position:absolute;left:293px;top:256px;width:11px;height:1px;background:repeating-linear-gradient(to right,#d2d2d2 0 1px,transparent 1px 2px)"></div>
<svg style="position:absolute;left:255px;top:357px;" width="3" height="11" viewBox="0 0 3 11"><rect x="0" y="0" width="2" height="2" fill="#333"/><rect x="0" y="3" width="2" height="2" fill="#333"/><rect x="0" y="6" width="2" height="2" fill="#333"/></svg>
<svg style="position:absolute;left:542px;top:357px;" width="3" height="11" viewBox="0 0 3 11"><rect x="0" y="0" width="2" height="2" fill="#333"/><rect x="0" y="3" width="2" height="2" fill="#333"/><rect x="0" y="6" width="2" height="2" fill="#333"/></svg>
<svg style="position:absolute;left:397px;top:431px;" width="9" height="3" viewBox="0 0 9 3"><rect x="0" y="0" width="2" height="2" fill="#333"/><rect x="3" y="0" width="2" height="2" fill="#333"/><rect x="6" y="0" width="2" height="2" fill="#333"/></svg>
<svg style="position:absolute;left:397px;top:687px;" width="9" height="3" viewBox="0 0 9 3"><rect x="0" y="0" width="2" height="2" fill="#333"/><rect x="3" y="0" width="2" height="2" fill="#333"/><rect x="6" y="0" width="2" height="2" fill="#333"/></svg>
<div style="position:absolute;left:260px;top:436px;width:280px;height:248px;border:1px solid #a9a9a9;background:#fff;box-sizing:border-box;"></div>
<div style="position:absolute;left:261px;top:437px;width:150px;height:207px;background:#f0f0f0;"></div>
<div style="position:absolute;left:261px;top:467px;width:278px;height:1px;background:#dcdcdc;"></div>
<div id="t61" style="transform:scaleX(1.0457);position:absolute;left:278px;transform-origin:left top;top:448.19px;font-size:11px;line-height:11px;font-weight:bold;color:#000;white-space:pre;">Name *</div>
<div id="t62" style="position:absolute;left:413px;transform-origin:left top;top:446.80px;font-size:11.7px;line-height:11.7px;font-weight:normal;color:#000;white-space:pre;">Shoes</div>
<div style="position:absolute;left:261px;top:497px;width:278px;height:1px;background:#dcdcdc;"></div>
<div id="t63" style="transform:scaleX(0.9227);position:absolute;left:278px;transform-origin:left top;top:478.19px;font-size:11px;line-height:11px;font-weight:bold;color:#000;white-space:pre;">Slug</div>
<div id="t64" style="position:absolute;left:413px;transform-origin:left top;top:476.80px;font-size:11.7px;line-height:11.7px;font-weight:normal;color:#000;white-space:pre;">shoes</div>
<div style="position:absolute;left:261px;top:527px;width:278px;height:1px;background:#dcdcdc;"></div>
<div id="t65" style="transform:scaleX(1.0101);position:absolute;left:278px;transform-origin:left top;top:508.19px;font-size:11px;line-height:11px;font-weight:bold;color:#000;white-space:pre;">Parent *</div>
<div id="t66" style="position:absolute;left:413px;transform-origin:left top;top:506.80px;font-size:11.7px;line-height:11.7px;font-weight:normal;color:#000;white-space:pre;">None</div>
<svg style="position:absolute;left:524px;top:510.0px;" width="9" height="5" viewBox="0 0 9 5"><path d="M0 0h8L4 4z" fill="#555"/></svg>
<div style="position:absolute;left:261px;top:584px;width:278px;height:1px;background:#dcdcdc;"></div>
<div id="t67" style="transform:scaleX(0.9667);position:absolute;left:278px;transform-origin:left top;top:551.69px;font-size:11px;line-height:11px;font-weight:bold;color:#000;white-space:pre;">Description</div>
<div style="position:absolute;left:261px;top:614px;width:278px;height:1px;background:#dcdcdc;"></div>
<div id="t68" style="transform:scaleX(0.9677);position:absolute;left:278px;transform-origin:left top;top:595.19px;font-size:11px;line-height:11px;font-weight:bold;color:#000;white-space:pre;">Order</div>
<div id="t69" style="position:absolute;left:413px;transform-origin:left top;top:593.80px;font-size:11.7px;line-height:11.7px;font-weight:normal;color:#000;white-space:pre;">1</div>
<svg style="position:absolute;left:524px;top:592.0px;" width="9" height="5" viewBox="0 0 9 5"><path d="M0 4h8L4 0z" fill="#555"/></svg>
<svg style="position:absolute;left:524px;top:602.0px;" width="9" height="5" viewBox="0 0 9 5"><path d="M0 0h8L4 4z" fill="#555"/></svg>
<div style="position:absolute;left:261px;top:644px;width:278px;height:1px;background:#dcdcdc;"></div>
<div id="t70" style="transform:scaleX(0.9844);position:absolute;left:278px;transform-origin:left top;top:625.19px;font-size:11px;line-height:11px;font-weight:bold;color:#000;white-space:pre;">Display Type</div>
<div id="t71" style="position:absolute;left:413px;transform-origin:left top;top:623.80px;font-size:11.7px;line-height:11.7px;font-weight:normal;color:#000;white-space:pre;">Default</div>
<svg style="position:absolute;left:524px;top:627.0px;" width="9" height="5" viewBox="0 0 9 5"><path d="M0 0h8L4 4z" fill="#555"/></svg>
<div style="position:absolute;left:546px;top:70px;width:725px;height:319px;border:1px solid #a9a9a9;background:#fff;box-sizing:border-box;"></div>
<div style="position:absolute;left:547px;top:71px;width:723px;height:29px;background:#f0f0f0;"></div>
<svg style="position:absolute;left:549px;top:81px;" width="8" height="8" viewBox="0 0 8 8"><path d="M0 1h7M0 3.5h7M0 6h7" stroke="#777" stroke-width="1"/></svg>
<div id="t72" style="transform:scaleX(0.9380);position:absolute;left:582.5px;transform-origin:left top;top:79.10px;font-size:11.7px;line-height:11.7px;font-weight:normal;color:#000;white-space:pre;">Preview</div>
<div id="t73" style="transform:scaleX(0.9412);position:absolute;left:661.4px;transform-origin:left top;top:79.10px;font-size:11.7px;line-height:11.7px;font-weight:normal;color:#000;white-space:pre;">ID</div>
<svg style="position:absolute;left:686.5px;top:78.5px;" width="13" height="13" viewBox="0 0 13 13"><g transform="scale(0.72)"><path d="M1.6 16.4V12.2L11.6 2.2L15.8 6.4L5.8 16.4Z" stroke="#8a8a8a" stroke-width="2" fill="none"/><path d="M11.6 1.5L16.5 6.4L12.3 10.6L7.4 5.7Z" fill="#8a8a8a"/></g></svg>
<div id="t74" style="transform:scaleX(0.9619);position:absolute;left:703.9px;transform-origin:left top;top:79.10px;font-size:11.7px;line-height:11.7px;font-weight:normal;color:#000;white-space:pre;">Name</div>
<svg style="position:absolute;left:806.5px;top:78.5px;" width="13" height="13" viewBox="0 0 13 13"><g transform="scale(0.72)"><path d="M1.6 16.4V12.2L11.6 2.2L15.8 6.4L5.8 16.4Z" stroke="#8a8a8a" stroke-width="2" fill="none"/><path d="M11.6 1.5L16.5 6.4L12.3 10.6L7.4 5.7Z" fill="#8a8a8a"/></g></svg>
<div id="t75" style="transform:scaleX(0.8317);position:absolute;left:824.5px;transform-origin:left top;top:79.10px;font-size:11.7px;line-height:11.7px;font-weight:normal;color:#000;white-space:pre;">SKU</div>
<svg style="position:absolute;left:918.5px;top:78.5px;" width="13" height="13" viewBox="0 0 13 13"><g transform="scale(0.72)"><path d="M1.6 16.4V12.2L11.6 2.2L15.8 6.4L5.8 16.4Z" stroke="#8a8a8a" stroke-width="2" fill="none"/><path d="M11.6 1.5L16.5 6.4L12.3 10.6L7.4 5.7Z" fill="#8a8a8a"/></g></svg>
<div id="t76" style="transform:scaleX(0.9540);position:absolute;left:935.5px;transform-origin:left top;top:79.10px;font-size:11.7px;line-height:11.7px;font-weight:normal;color:#000;white-space:pre;">Product Type</div>
<svg style="position:absolute;left:1050.5px;top:78.5px;" width="13" height="13" viewBox="0 0 13 13"><g transform="scale(0.72)"><path d="M1.6 16.4V12.2L11.6 2.2L15.8 6.4L5.8 16.4Z" stroke="#8a8a8a" stroke-width="2" fill="none"/><path d="M11.6 1.5L16.5 6.4L12.3 10.6L7.4 5.7Z" fill="#8a8a8a"/></g></svg>
<div style="position:absolute;left:1068px;top:70px;width:55px;height:30px;overflow:hidden">
<div id="t77" style="transform:scaleX(0.9702);position:absolute;left:0px;transform-origin:left top;top:9.10px;font-size:11.7px;line-height:11.7px;font-weight:normal;color:#000;white-space:pre;">Post Status</div>
</div>
<div id="t78" style="transform:scaleX(0.9391);position:absolute;left:1154px;transform-origin:left top;top:79.10px;font-size:11.7px;line-height:11.7px;font-weight:normal;color:#000;white-space:pre;">Regular Price</div>
<svg style="position:absolute;left:1224.5px;top:78.5px;" width="13" height="13" viewBox="0 0 13 13"><g transform="scale(0.72)"><path d="M1.6 16.4V12.2L11.6 2.2L15.8 6.4L5.8 16.4Z" stroke="#8a8a8a" stroke-width="2" fill="none"/><path d="M11.6 1.5L16.5 6.4L12.3 10.6L7.4 5.7Z" fill="#8a8a8a"/></g></svg>
<svg style="position:absolute;left:1242px;top:81px;" width="10" height="9" viewBox="0 0 10 9"><path d="M0 0.5h2.5M0 3h5M0 5.5h7.5M0 8h10" stroke="#555" stroke-width="1"/></svg>
<div style="position:absolute;left:559px;top:100px;width:711px;height:38px;background:#ffffff;"></div>
<div style="position:absolute;left:547px;top:138px;width:723px;height:39px;background:#ededf2;"></div>
<div style="position:absolute;left:680px;top:139px;width:121px;height:38px;background:#ffffff;"></div>
<div style="position:absolute;left:547px;top:138px;width:723px;height:1px;background:#dedede;"></div>
<div style="position:absolute;left:547px;top:177px;width:723px;height:1px;background:#dedede;"></div>
<div style="position:absolute;left:547px;top:100px;width:12px;height:38px;background:#f0f0f0;"></div>
<svg style="position:absolute;left:550px;top:153px;" width="6" height="10" viewBox="0 0 6 10"><path d="M0.5 0.5L5 5 0.5 9.5z" fill="#555"/></svg>
<div style="position:absolute;left:587px;top:102px;width:30px;height:36px;background:#eaedf2;"></div>
<svg style="position:absolute;left:590px;top:117px;" width="25" height="16" viewBox="0 0 25 16"><path d="M2 13.5L2.3 6.5Q2.8 4.5 4.8 4.6L6.5 5.6Q8 6.3 9 4.6L10.5 3.7Q13 5 16 7.2L21.5 9Q23.2 10 23 12L22.5 13.7Z" fill="#8c8882"/><path d="M6 9.5Q10 8 14 9.5L18 10" stroke="#6d6a66" stroke-width="1.2" fill="none"/><path d="M2.2 12.5H22.5" stroke="#a9a59e" stroke-width="1.3"/></svg>
<div style="position:absolute;left:587px;top:140px;width:30px;height:37px;background:#ebebf0;"></div>
<svg style="position:absolute;left:588px;top:160px;" width="28" height="16" viewBox="0 0 28 16"><path d="M2 11.2L2.5 5.5Q3 4.8 4 5L6 6.3Q8 6.8 10 4L11.5 3.2Q14 4.5 17 7L25 9.5Q27 10.5 26.8 11.5Z" fill="#131317"/><path d="M1.8 11H27V12.8Q26 13.9 24 13.8H3Q1.8 13.8 1.8 12.5Z" fill="#f2f2f2" stroke="#8a8a8a" stroke-width="0.7"/><path d="M5.5 9.3Q10 6.8 13.5 7.6Q17 9 21 9.3" stroke="#f0f0f0" stroke-width="1.2" fill="none"/></svg>
<div id="t79" style="transform:scaleX(0.8515);position:absolute;left:659.7px;transform-origin:left top;top:113.10px;font-size:11.7px;line-height:11.7px;font-weight:normal;color:#000;white-space:pre;">155 SOFT SNEAKERS</div>
<div id="t80" style="transform:scaleX(0.8751);position:absolute;left:802.7px;transform-origin:left top;top:113.10px;font-size:11.7px;line-height:11.7px;font-weight:normal;color:#000;white-space:pre;">SOFS-23456</div>
<svg style="position:absolute;left:915px;top:111px;" width="15" height="16" viewBox="0 0 15 16"><path d="M2.2 1h7.3l3.8 3.8v9.2a1 1 0 0 1-1 1H2.2a1 1 0 0 1-1-1V2a1 1 0 0 1 1-1z" stroke="#3f3f3f" stroke-width="1.8" fill="none" stroke-linejoin="round"/><path d="M3.8 6h3M3.8 9h6.8M3.8 12h5" stroke="#3f3f3f" stroke-width="1.4"/></svg>
<div id="t81" style="transform:scaleX(0.9739);position:absolute;left:935.8px;transform-origin:left top;top:113.10px;font-size:11.7px;line-height:11.7px;font-weight:normal;color:#000;white-space:pre;">Simple Product</div>
<svg style="position:absolute;left:1048px;top:113px;" width="17" height="13" viewBox="0 0 17 13"><path d="M1 6.5l4.5 4.5L16 1" stroke="#444" stroke-width="2.4" fill="none"/></svg>
<div id="t82" style="transform:scaleX(0.9738);position:absolute;left:1069.6px;transform-origin:left top;top:113.10px;font-size:11.7px;line-height:11.7px;font-weight:normal;color:#000;white-space:pre;">Published</div>
<div id="t83" style="transform:scaleX(0.8991);position:absolute;right:12px;transform-origin:right top;top:113.10px;font-size:11.7px;line-height:11.7px;font-weight:normal;color:#000;white-space:pre;">89.00</div>
<div id="t84" style="transform:scaleX(0.8711);position:absolute;left:659.4px;transform-origin:left top;top:152.10px;font-size:11.7px;line-height:11.7px;font-weight:normal;color:#38349a;white-space:pre;">149</div>
<div id="t85" style="transform:scaleX(0.9739);position:absolute;left:935.8px;transform-origin:left top;top:152.10px;font-size:11.7px;line-height:11.7px;font-weight:normal;color:#38349a;white-space:pre;">Simple Product</div>
<svg style="position:absolute;left:1048px;top:152px;" width="17" height="13" viewBox="0 0 17 13"><path d="M1 6.5l4.5 4.5L16 1" stroke="#444" stroke-width="2.4" fill="none"/></svg>
<div id="t86" style="transform:scaleX(0.9738);position:absolute;left:1069.6px;transform-origin:left top;top:152.10px;font-size:11.7px;line-height:11.7px;font-weight:normal;color:#38349a;white-space:pre;">Published</div>
<div id="t87" style="transform:scaleX(0.9007);position:absolute;right:12px;transform-origin:right top;top:152.10px;font-size:11.7px;line-height:11.7px;font-weight:normal;color:#38349a;white-space:pre;">129.00</div>
<svg style="position:absolute;left:553px;top:403px;" width="3" height="11" viewBox="0 0 3 11"><rect x="0" y="0" width="2" height="2" fill="#555"/><rect x="0" y="4" width="2" height="2" fill="#555"/><rect x="0" y="8" width="2" height="2" fill="#555"/></svg>
<div id="t88" style="transform:scaleX(1.0391);position:absolute;left:566.2px;transform-origin:left top;top:402.10px;font-size:11.7px;line-height:11.7px;font-weight:normal;color:#000;white-space:pre;">Filter</div>
<div style="position:absolute;left:596px;top:397px;width:120px;height:22px;border:1px solid #a9a9a9;background:#fff;box-sizing:border-box;"></div>
<div id="t89" style="transform:scaleX(0.9961);position:absolute;left:599px;transform-origin:left top;top:402.10px;font-size:11.7px;line-height:11.7px;font-weight:normal;color:#000;white-space:pre;">Filter by selected</div>
<div id="t90" style="transform:scaleX(0.9592);position:absolute;left:930.2px;transform-origin:left top;top:402.10px;font-size:11.7px;line-height:11.7px;font-weight:normal;color:#000;white-space:pre;">Show Trash</div>
<svg style="position:absolute;left:1001px;top:403px;" width="3" height="11" viewBox="0 0 3 11"><rect x="0" y="0" width="2" height="2" fill="#555"/><rect x="0" y="4" width="2" height="2" fill="#555"/><rect x="0" y="8" width="2" height="2" fill="#555"/></svg>
<div id="t91" style="transform:scaleX(0.9711);position:absolute;left:1014px;transform-origin:left top;top:402.10px;font-size:11.7px;line-height:11.7px;font-weight:normal;color:#000;white-space:pre;">View</div>
<div style="position:absolute;left:1043px;top:397px;width:45px;height:22px;border:1px solid #a9a9a9;background:#fff;box-sizing:border-box;"></div>
<div id="t92" style="transform:scaleX(0.9617);position:absolute;left:1046px;transform-origin:left top;top:402.10px;font-size:11.7px;line-height:11.7px;font-weight:normal;color:#000;white-space:pre;">ALL</div>
<svg style="position:absolute;left:1074px;top:406px;" width="8" height="5" viewBox="0 0 8 5"><path d="M0 0h7L3.5 3.5z" fill="#555"/></svg>
<div id="t93" style="transform:scaleX(0.9709);position:absolute;left:1093.8px;transform-origin:left top;top:402.10px;font-size:11.7px;line-height:11.7px;font-weight:normal;color:#000;white-space:pre;">per page</div>
<svg style="position:absolute;left:1148px;top:401px;" width="18" height="14" viewBox="0 0 18 14"><path d="M9 7H2M5.5 3.5L2 7l3.5 3.5" stroke="#c9c9c9" stroke-width="1.7" fill="none"/><rect x="14" y="2" width="2" height="2" fill="#c9c9c9"/><rect x="14" y="6" width="2" height="2" fill="#c9c9c9"/><rect x="14" y="10" width="2" height="2" fill="#c9c9c9"/></svg>
<svg style="position:absolute;left:1176px;top:401px;" width="14" height="14" viewBox="0 0 14 14"><path d="M13 7H2M5.5 3.5L2 7l3.5 3.5" stroke="#c9c9c9" stroke-width="1.7" fill="none"/></svg>
<div style="position:absolute;left:1198px;top:397px;width:35px;height:22px;border:1px solid #c3c3c3;background:#fff;box-sizing:border-box;"></div>
<div id="t94" style="position:absolute;left:1203px;transform-origin:left top;top:402.10px;font-size:11.7px;line-height:11.7px;font-weight:normal;color:#aaaaaa;white-space:pre;">1</div>
<svg style="position:absolute;left:1240px;top:401px;" width="14" height="14" viewBox="0 0 14 14"><path d="M1 7h11M8.5 3.5L12 7l-3.5 3.5" stroke="#c9c9c9" stroke-width="1.7" fill="none"/></svg>
<svg style="position:absolute;left:1267px;top:403px;" width="3" height="11" viewBox="0 0 3 11"><rect x="0" y="0" width="2" height="2" fill="#d6d6d6"/><rect x="0" y="4" width="2" height="2" fill="#d6d6d6"/><rect x="0" y="8" width="2" height="2" fill="#d6d6d6"/></svg>
<svg style="position:absolute;left:1038px;top:430px;" width="9" height="3" viewBox="0 0 9 3"><rect x="0" y="0" width="2" height="2" fill="#333"/><rect x="3" y="0" width="2" height="2" fill="#333"/><rect x="6" y="0" width="2" height="2" fill="#333"/></svg>
<div style="position:absolute;left:993px;top:428px;width:17px;height:1px;background:#e6e6e6;"></div>
<div style="position:absolute;left:546px;top:427px;width:16px;height:1px;background:#e0e0e0;"></div>
<div style="position:absolute;left:546px;top:435px;width:195px;height:254px;border:1px solid #a9a9a9;background:#fff;box-sizing:border-box;"></div>
<div style="position:absolute;left:547px;top:465px;width:193px;height:29px;background:#ebebf0;"></div>
<div style="position:absolute;left:547px;top:465px;width:5px;height:29px;background:#4a4956;"></div>
<svg style="position:absolute;left:561px;top:442.5px;" width="16" height="16" viewBox="0 0 16 16"><rect x="1" y="2" width="14" height="12" stroke="#4a4a4f" stroke-width="1.8" fill="none"/><path d="M3.5 6h2M7 6h5.5M3.5 9.5h2M7 9.5h5.5" stroke="#4a4a4f" stroke-width="1.6"/></svg>
<div id="t95" style="transform:scaleX(0.9502);position:absolute;left:584.5px;transform-origin:left top;top:444.60px;font-size:11.7px;line-height:11.7px;font-weight:normal;color:#000;white-space:pre;">Content</div>
<svg style="position:absolute;left:561px;top:471.5px;" width="16" height="16" viewBox="0 0 16 16"><circle cx="8" cy="8" r="6.8" stroke="#4a4a4f" stroke-width="1.6" fill="none"/><rect x="7.1" y="6.8" width="1.9" height="5.2" fill="#4a4a4f"/><rect x="7.1" y="3.8" width="1.9" height="1.9" fill="#4a4a4f"/></svg>
<div id="t96" style="transform:scaleX(0.8775);position:absolute;left:584.5px;transform-origin:left top;top:473.60px;font-size:11.7px;line-height:11.7px;font-weight:normal;color:#000;white-space:pre;">General</div>
<svg style="position:absolute;left:561px;top:500.5px;" width="16" height="16" viewBox="0 0 16 16"><path d="M0.5 5L2.5 0.5h11l2 4.5v10.5h-15z" fill="#4a4a4f"/><rect x="3" y="8" width="4" height="7.5" fill="#fff"/><rect x="9" y="8" width="4" height="3.5" fill="#fff"/><rect x="4" y="12" width="2" height="2" fill="#4a4a4f"/><rect x="9" y="12.5" width="3" height="2" fill="#4a4a4f"/></svg>
<div id="t97" style="transform:scaleX(0.9921);position:absolute;left:584.5px;transform-origin:left top;top:502.60px;font-size:11.7px;line-height:11.7px;font-weight:normal;color:#000;white-space:pre;">Inventory</div>
<svg style="position:absolute;left:561px;top:529.5px;" width="16" height="16" viewBox="0 0 16 16"><rect x="1" y="1" width="10" height="11" fill="#4a4a4f"/><rect x="3" y="4" width="3" height="3" fill="#fff"/><path d="M12.5 1v11M0.5 14h15" stroke="#4a4a4f" stroke-width="1.7" stroke-dasharray="1.5 1.5"/><path d="M14.5 1v13" stroke="#4a4a4f" stroke-width="1.6"/></svg>
<div id="t98" style="transform:scaleX(0.8747);position:absolute;left:584.5px;transform-origin:left top;top:531.60px;font-size:11.7px;line-height:11.7px;font-weight:normal;color:#000;white-space:pre;">Shipping</div>
<svg style="position:absolute;left:561px;top:558.5px;" width="16" height="16" viewBox="0 0 16 16"><path d="M5 15H1.5V1.5H14V8" stroke="#4a4a4f" stroke-width="1.7" fill="none"/><rect x="5" y="1" width="6" height="3" fill="#4a4a4f"/><path d="M7 9.5h3v4H7zM11 9.5h3v4h-3z" stroke="#4a4a4f" stroke-width="1.3" fill="none"/></svg>
<div id="t99" style="transform:scaleX(0.8925);position:absolute;left:584.5px;transform-origin:left top;top:560.60px;font-size:11.7px;line-height:11.7px;font-weight:normal;color:#000;white-space:pre;">Linked Products</div>
<svg style="position:absolute;left:561px;top:587.5px;" width="16" height="16" viewBox="0 0 16 16"><path d="M9 0.5h6.5V7L7 15.5 0.5 9z" fill="#4a4a4f"/><circle cx="12" cy="4" r="1.3" fill="#fff"/></svg>
<div id="t100" style="transform:scaleX(0.9661);position:absolute;left:584.5px;transform-origin:left top;top:589.60px;font-size:11.7px;line-height:11.7px;font-weight:normal;color:#000;white-space:pre;">Attributes</div>
<svg style="position:absolute;left:561px;top:616.5px;" width="16" height="16" viewBox="0 0 16 16"><path d="M8 0.5v15M1.5 4.2l13 7.6M1.5 11.8l13-7.6" stroke="#4a4a4f" stroke-width="2.6"/></svg>
<div id="t101" style="transform:scaleX(0.9176);position:absolute;left:584.5px;transform-origin:left top;top:618.60px;font-size:11.7px;line-height:11.7px;font-weight:normal;color:#000;white-space:pre;">Advanced</div>
<svg style="position:absolute;left:561px;top:645.5px;" width="17" height="15" viewBox="0 0 17 15"><path d="M0.5 0.5h6l1.5 2h8.5v12h-16z" fill="#4a4a4f"/></svg>
<div id="t102" style="transform:scaleX(0.9092);position:absolute;left:584.5px;transform-origin:left top;top:647.60px;font-size:11.7px;line-height:11.7px;font-weight:normal;color:#000;white-space:pre;">Categories</div>
<svg style="position:absolute;left:561px;top:674.5px;" width="16" height="16" viewBox="0 0 16 16"><path d="M5 3.5V1h6v2.5" stroke="#4a4a4f" stroke-width="1.6" fill="none"/><rect x="1" y="4" width="14" height="11" rx="1.2" stroke="#4a4a4f" stroke-width="1.8" fill="none"/><rect x="4.5" y="8" width="7" height="2" fill="#4a4a4f"/></svg>
<div id="t103" style="transform:scaleX(0.9218);position:absolute;left:584.5px;transform-origin:left top;top:676.60px;font-size:11.7px;line-height:11.7px;font-weight:normal;color:#000;white-space:pre;">Product Tags</div>
<div style="position:absolute;left:546px;top:689px;width:196px;height:2px;background:#ffffff;"></div>
<div style="position:absolute;left:546px;top:688px;width:195px;height:1px;background:#a9a9a9;"></div>
<div style="position:absolute;left:748px;top:466px;width:523px;height:224px;border:1px solid #a9a9a9;background:#fff;box-sizing:border-box;"></div>
<div style="position:absolute;left:930px;top:441px;width:17px;height:19px;border:1px solid #a5a5a5;background:#fff;box-sizing:border-box;"></div>
<div style="position:absolute;left:957px;top:442px;width:16px;height:16px;border:1px solid #a5a5a5;background:#fff;box-sizing:border-box;"></div>
<div id="t104" style="transform:scaleX(1.0115);position:absolute;left:978px;transform-origin:left top;top:444.10px;font-size:11.7px;line-height:11.7px;font-weight:normal;color:#000;white-space:pre;">Virtual</div>
<div style="position:absolute;left:1014px;top:442px;width:16px;height:16px;border:1px solid #a5a5a5;background:#fff;box-sizing:border-box;"></div>
<div id="t105" style="transform:scaleX(1.0124);position:absolute;left:1035.4px;transform-origin:left top;top:444.10px;font-size:11.7px;line-height:11.7px;font-weight:normal;color:#000;white-space:pre;">Downloadable</div>
<div style="position:absolute;left:1113px;top:442px;width:16px;height:16px;border:1px solid #a5a5a5;background:#fff;box-sizing:border-box;"></div>
<div id="t106" style="transform:scaleX(0.9641);position:absolute;left:1134.4px;transform-origin:left top;top:444.10px;font-size:11.7px;line-height:11.7px;font-weight:normal;color:#000;white-space:pre;">Featured</div>
<div style="position:absolute;left:749px;top:467px;width:149px;height:222px;background:#f0f0f0;"></div>
<div style="position:absolute;left:749px;top:557px;width:521px;height:30px;background:#f0f0f0;"></div>
<div style="position:absolute;left:749px;top:677px;width:521px;height:12px;background:#f0f0f0;"></div>
<div style="position:absolute;left:749px;top:497px;width:521px;height:1px;background:#dcdcdc;"></div>
<div style="position:absolute;left:749px;top:527px;width:521px;height:1px;background:#dcdcdc;"></div>
<div style="position:absolute;left:749px;top:557px;width:521px;height:1px;background:#dcdcdc;"></div>
<div style="position:absolute;left:749px;top:587px;width:521px;height:1px;background:#dcdcdc;"></div>
<div style="position:absolute;left:749px;top:617px;width:521px;height:1px;background:#dcdcdc;"></div>
<div style="position:absolute;left:749px;top:647px;width:521px;height:1px;background:#dcdcdc;"></div>
<div style="position:absolute;left:749px;top:677px;width:521px;height:1px;background:#dcdcdc;"></div>
<div id="t107" style="transform:scaleX(0.8919);position:absolute;right:300.6px;transform-origin:right top;top:477.10px;font-size:11.7px;line-height:11.7px;font-weight:normal;color:#000;white-space:pre;">53526</div>
<div id="t108" style="transform:scaleX(0.9490);position:absolute;left:778.9px;transform-origin:left top;top:627.69px;font-size:11px;line-height:11px;font-weight:bold;color:#000;white-space:pre;">Sale Price To</div>
<div id="t109" style="transform:scaleX(0.9837);position:absolute;left:765px;transform-origin:left top;top:658.19px;font-size:11px;line-height:11px;font-weight:bold;color:#000;white-space:pre;">Catalog Visibility</div>
<div id="t110" style="transform:scaleX(0.9734);position:absolute;left:900px;transform-origin:left top;top:657.60px;font-size:11.7px;line-height:11.7px;font-weight:normal;color:#000;white-space:pre;">Shop and search results</div>
<div style="position:absolute;left:681px;top:145px;width:261px;height:483px;background:#fff;border:1px solid #cfcfcf;box-sizing:border-box;box-shadow:2px 3px 4px rgba(0,0,0,0.28)"></div>
<div style="position:absolute;left:683px;top:173px;width:257px;height:27px;background:#ededf1;"></div>
<svg style="position:absolute;left:687px;top:151px;" width="18" height="18" viewBox="0 0 18 18"><path d="M15.4 11.3A6.8 6.8 0 1 1 13.8 4.2" stroke="#707070" stroke-width="2" fill="none"/><path d="M16 1V6.8H10.2" stroke="#707070" stroke-width="2" fill="none"/></svg>
<div id="t111" style="transform:scaleX(0.9453);position:absolute;left:718.4px;transform-origin:left top;top:154.10px;font-size:11.7px;line-height:11.7px;font-weight:normal;color:#000;white-space:pre;">Refresh</div>
<svg style="position:absolute;left:689.0px;top:180.0px;" width="14" height="14" viewBox="0 0 14 14"><path d="M7.0 0V14 M0 7.0H14" stroke="#3aa03a" stroke-width="2"/></svg>
<div id="t112" style="transform:scaleX(1.0287);position:absolute;left:718.4px;transform-origin:left top;top:181.10px;font-size:11.7px;line-height:11.7px;font-weight:normal;color:#000;white-space:pre;">Add New</div>
<svg style="position:absolute;left:687px;top:204px;" width="18" height="18" viewBox="0 0 18 18"><path d="M1.6 16.4V12.2L11.6 2.2L15.8 6.4L5.8 16.4Z" stroke="#707070" stroke-width="1.9" fill="none" stroke-linejoin="miter"/><path d="M11.6 1.5L16.5 6.4L12.3 10.6L7.4 5.7Z" fill="#707070"/></svg>
<div id="t113" style="transform:scaleX(1.0146);position:absolute;left:718.4px;transform-origin:left top;top:207.10px;font-size:11.7px;line-height:11.7px;font-weight:normal;color:#000;white-space:pre;">Edit Product</div>
<div style="position:absolute;left:712px;top:226px;width:228px;height:1px;background:#ececec;"></div>
<svg style="position:absolute;left:688px;top:231px;" width="16" height="16" viewBox="0 0 16 16"><circle cx="9.8" cy="6.2" r="5" stroke="#707070" stroke-width="1.7" fill="none"/><path d="M6.3 9.7L1 15" stroke="#707070" stroke-width="2"/></svg>
<div id="t114" style="transform:scaleX(0.9259);position:absolute;left:718.4px;transform-origin:left top;top:233.10px;font-size:11.7px;line-height:11.7px;font-weight:normal;color:#000;white-space:pre;">Search</div>
<div style="position:absolute;left:712px;top:254px;width:228px;height:1px;background:#ececec;"></div>
<svg style="position:absolute;left:688px;top:259px;" width="16" height="16" viewBox="0 0 16 16"><path d="M5 12H1.8V1.8H11V4" stroke="#707070" stroke-width="1.6" fill="none"/><rect x="5.8" y="5.8" width="9" height="9.4" rx="1" stroke="#707070" stroke-width="1.6" fill="none"/></svg>
<div id="t115" style="transform:scaleX(1.0331);position:absolute;left:718.4px;transform-origin:left top;top:261.10px;font-size:11.7px;line-height:11.7px;font-weight:normal;color:#000;white-space:pre;">Copy</div>
<svg style="position:absolute;left:688px;top:285px;" width="16" height="16" viewBox="0 0 16 16"><rect x="2.5" y="2.5" width="11" height="12.8" rx="1.5" stroke="#cfcfcf" stroke-width="1.6" fill="none"/><rect x="5" y="1" width="6" height="2.5" fill="#cfcfcf"/></svg>
<div id="t116" style="transform:scaleX(0.9367);position:absolute;left:718.4px;transform-origin:left top;top:287.10px;font-size:11.7px;line-height:11.7px;font-weight:normal;color:#a0a0a0;white-space:pre;">Paste</div>
<svg style="position:absolute;left:688px;top:311px;" width="16" height="16" viewBox="0 0 16 16"><rect x="1.3" y="6.3" width="8.5" height="8.5" rx="1" stroke="#707070" stroke-width="1.6" fill="none"/><path d="M6 1.3h2M10 1.3h2M14.5 1.3v2M14.5 5.5v2M14.5 9.5v2M12.5 11.5h-1" stroke="#707070" stroke-width="1.6"/></svg>
<div id="t117" style="transform:scaleX(1.0148);position:absolute;left:718.4px;transform-origin:left top;top:313.10px;font-size:11.7px;line-height:11.7px;font-weight:normal;color:#000;white-space:pre;">Clone</div>
<div style="position:absolute;left:712px;top:333px;width:228px;height:1px;background:#ececec;"></div>
<svg style="position:absolute;left:688px;top:340px;" width="16" height="12" viewBox="0 0 16 12"><path d="M0.5 6L5 0.3h10.7v11.4H5z" fill="#707070"/><path d="M7.3 3.3l5 5M12.3 3.3l-5 5" stroke="#fff" stroke-width="1.8"/></svg>
<div id="t118" style="transform:scaleX(1.0226);position:absolute;left:718.4px;transform-origin:left top;top:340.10px;font-size:11.7px;line-height:11.7px;font-weight:normal;color:#000;white-space:pre;">Draft</div>
<svg style="position:absolute;left:689px;top:364px;" width="14" height="16" viewBox="0 0 14 16"><rect x="0" y="2.5" width="14" height="3" fill="#707070"/><rect x="4.5" y="0.5" width="5" height="3" rx="1" fill="#707070"/><path d="M1.5 6.5h11v7.5a1.5 1.5 0 0 1-1.5 1.5H3A1.5 1.5 0 0 1 1.5 14z" fill="#707070"/><rect x="5" y="8.5" width="4" height="1.5" fill="#fff"/></svg>
<div id="t119" style="transform:scaleX(0.9031);position:absolute;left:718.4px;transform-origin:left top;top:366.10px;font-size:11.7px;line-height:11.7px;font-weight:normal;color:#000;white-space:pre;">Trash</div>
<svg style="position:absolute;left:690.0px;top:392.0px;" width="12" height="12" viewBox="0 0 12 12"><path d="M0.7 0.7L11.3 11.3M11.3 0.7L0.7 11.3" stroke="#e26464" stroke-width="2"/></svg>
<div id="t120" style="transform:scaleX(0.9646);position:absolute;left:718.4px;transform-origin:left top;top:392.10px;font-size:11.7px;line-height:11.7px;font-weight:normal;color:#000;white-space:pre;">Delete</div>
<div style="position:absolute;left:712px;top:411px;width:228px;height:1px;background:#ececec;"></div>
<svg style="position:absolute;left:688px;top:417px;" width="16" height="16" viewBox="0 0 16 16"><path d="M1 8v7h14V8" stroke="#707070" stroke-width="2.2" fill="none"/><rect x="1" y="12.5" width="14" height="3" fill="#707070" rx="1"/><path d="M8 11V2.5" stroke="#707070" stroke-width="2"/><path d="M4 6.2L8 2l4 4.2z" fill="#707070"/></svg>
<div id="t121" style="transform:scaleX(0.9976);position:absolute;left:718.4px;transform-origin:left top;top:419.10px;font-size:11.7px;line-height:11.7px;font-weight:normal;color:#000;white-space:pre;">Export</div>
<div style="position:absolute;left:712px;top:439px;width:228px;height:1px;background:#ececec;"></div>
<svg style="position:absolute;left:688px;top:444px;" width="16" height="16" viewBox="0 0 16 16"><path d="M1 8v7h14V8" stroke="#707070" stroke-width="2.2" fill="none"/><rect x="1" y="12.5" width="14" height="3" fill="#707070" rx="1"/><path d="M8 1V9" stroke="#707070" stroke-width="2"/><path d="M4 6.5L8 10.5l4-4z" fill="#707070"/></svg>
<div id="t122" style="transform:scaleX(1.0717);position:absolute;left:718.4px;transform-origin:left top;top:446.10px;font-size:11.7px;line-height:11.7px;font-weight:normal;color:#000;white-space:pre;">Import</div>
<div style="position:absolute;left:712px;top:466px;width:228px;height:1px;background:#ececec;"></div>
<svg style="position:absolute;left:688px;top:471px;" width="16" height="16" viewBox="0 0 16 16"><path d="M1.5 15.5V1.5H14.5M4.8 15.5V4.8H14.5" stroke="#707070" stroke-width="1.7" fill="none"/><path d="M11 8v7.5M7.8 9.9l6.4 3.7M7.8 13.6l6.4-3.7" stroke="#707070" stroke-width="1.6"/></svg>
<div id="t123" style="transform:scaleX(0.9866);position:absolute;left:718.4px;transform-origin:left top;top:473.10px;font-size:11.7px;line-height:11.7px;font-weight:normal;color:#000;white-space:pre;">Mass Changer</div>
<div style="position:absolute;left:712px;top:493px;width:228px;height:1px;background:#ececec;"></div>
<svg style="position:absolute;left:688px;top:498px;" width="16" height="16" viewBox="0 0 16 16"><path d="M6.5 15H1.8V2.3H12.5V7" stroke="#707070" stroke-width="1.7" fill="none"/><rect x="4.5" y="0.5" width="6" height="3" fill="#707070"/><path d="M4 6.5h2M7.5 6.5h3M4 9.5h2M7.5 9.5h1" stroke="#707070" stroke-width="1.5"/><path d="M12.5 9v6.5M9.2 12.2h6.6" stroke="#707070" stroke-width="1.7"/></svg>
<div id="t124" style="transform:scaleX(0.9961);position:absolute;left:718.4px;transform-origin:left top;top:500.10px;font-size:11.7px;line-height:11.7px;font-weight:normal;color:#000;white-space:pre;">Create Order with Selected Products</div>
<div style="position:absolute;left:712px;top:519px;width:228px;height:1px;background:#ececec;"></div>
<svg style="position:absolute;left:688px;top:524px;" width="17" height="16" viewBox="0 0 17 16"><path d="M6 14H1.8V1.8H14.2V8" stroke="#707070" stroke-width="1.7" fill="none"/><rect x="1" y="1" width="14" height="3" fill="#707070"/><path d="M6.5 12.2c2.5-3.8 7.5-3.8 10 0c-2.5 3.8-7.5 3.8-10 0z" stroke="#707070" stroke-width="1.4" fill="#fff"/><circle cx="11.5" cy="12.2" r="1.3" fill="#707070"/></svg>
<div id="t125" style="transform:scaleX(1.0020);position:absolute;left:718.4px;transform-origin:left top;top:526.10px;font-size:11.7px;line-height:11.7px;font-weight:normal;color:#000;white-space:pre;">View Product Page</div>
<svg style="position:absolute;left:688px;top:550px;" width="17" height="16" viewBox="0 0 17 16"><path d="M1.5 0.5h9v7" stroke="#707070" stroke-width="1.6" fill="none"/><rect x="1" y="0.5" width="5" height="15" fill="#707070"/><path d="M6.5 12.2c2.5-3.8 7.5-3.8 10 0c-2.5 3.8-7.5 3.8-10 0z" stroke="#707070" stroke-width="1.4" fill="#fff"/><circle cx="11.5" cy="12.2" r="1.3" fill="#707070"/><path d="M7.5 3h2M7.5 6h2" stroke="#fff" stroke-width="1.3"/></svg>
<div id="t126" style="transform:scaleX(1.0256);position:absolute;left:718.4px;transform-origin:left top;top:552.10px;font-size:11.7px;line-height:11.7px;font-weight:normal;color:#000;white-space:pre;">View Product in Admin Panel</div>
<div style="position:absolute;left:712px;top:572px;width:228px;height:1px;background:#ececec;"></div>
<svg style="position:absolute;left:688px;top:577px;" width="16" height="16" viewBox="0 0 16 16"><rect x="1.5" y="2.5" width="13" height="13" rx="1" stroke="#707070" stroke-width="1.8" fill="none"/><path d="M4.5 0.5v3M11.5 0.5v3" stroke="#707070" stroke-width="1.8"/><path d="M4 7h2M8 7h4.5M4 10h2M8 10h4.5M4 13h2M8 13h4.5" stroke="#707070" stroke-width="1.6"/></svg>
<div id="t127" style="transform:scaleX(1.0267);position:absolute;left:718.4px;transform-origin:left top;top:579.10px;font-size:11.7px;line-height:11.7px;font-weight:normal;color:#000;white-space:pre;">Addons</div>
<svg style="position:absolute;left:927px;top:580px;" width="5" height="9" viewBox="0 0 5 9"><path d="M0 0l4.5 4.5L0 9z" fill="#111"/></svg>
<div style="position:absolute;left:712px;top:599px;width:228px;height:1px;background:#ececec;"></div>
<svg style="position:absolute;left:688px;top:604px;" width="17" height="16" viewBox="0 0 17 16"><path d="M1 5V1h4M12 1h4v4M16 11v4h-4M5 15H1v-4" stroke="#707070" stroke-width="1.7" fill="none"/><path d="M5 4.5v7M7.5 4.5v7M10 4.5v7M12.2 4.5v7" stroke="#707070" stroke-width="1.4"/></svg>
<div id="t128" style="transform:scaleX(0.9771);position:absolute;left:718.4px;transform-origin:left top;top:606.10px;font-size:11.7px;line-height:11.7px;font-weight:normal;color:#000;white-space:pre;">Reports</div>
<svg style="position:absolute;left:927px;top:607px;" width="5" height="9" viewBox="0 0 5 9"><path d="M0 0l4.5 4.5L0 9z" fill="#111"/></svg>
<svg style="position:absolute;left:824px;top:177px;" width="15" height="22" viewBox="0 0 15 22"><path d="M1 1V16L4.6 12.6L7.6 19.5L10.6 18.2L7.6 11.6H12.4Z" fill="#000" stroke="#fff" stroke-width="1" stroke-linejoin="miter"/></svg>
<svg style="position:absolute;left:590px;top:55px;" width="110" height="130" viewBox="0 0 110 130"><line x1="25" y1="21" x2="90" y2="114" stroke="#e8403f" stroke-width="4" stroke-dasharray="4 3.2"/><path d="M19.6 8.2L33.2 15.5 22.3 23.7z" fill="#e8403f"/><path d="M97.9 121.1L83.3 113.8 95.2 107.5z" fill="#e8403f"/></svg>
</body></html>
